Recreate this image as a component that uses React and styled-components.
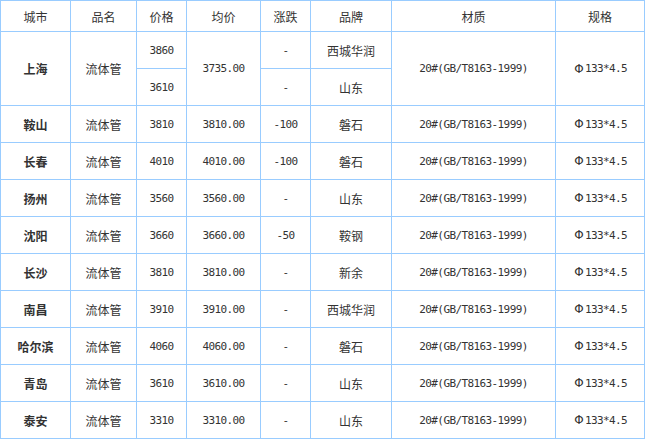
import styled, { createGlobalStyle } from "styled-components";

const GlobalStyle = createGlobalStyle`
    body {
        margin: 0;
        background: #fff;
        font-family: "Noto Sans CJK SC", sans-serif;
    }
`;

const rows = [
    { city: "鞍山", price: "3810", avg: "3810.00", change: "-100", brand: "磐石" },
    { city: "长春", price: "4010", avg: "4010.00", change: "-100", brand: "磐石" },
    { city: "扬州", price: "3560", avg: "3560.00", change: "-", brand: "山东" },
    { city: "沈阳", price: "3660", avg: "3660.00", change: "-50", brand: "鞍钢" },
    { city: "长沙", price: "3810", avg: "3810.00", change: "-", brand: "新余" },
    { city: "南昌", price: "3910", avg: "3910.00", change: "-", brand: "西城华润" },
    { city: "哈尔滨", price: "4060", avg: "4060.00", change: "-", brand: "磐石" },
    { city: "青岛", price: "3610", avg: "3610.00", change: "-", brand: "山东" },
    { city: "泰安", price: "3310", avg: "3310.00", change: "-", brand: "山东" },
];

const MATERIAL = "20#(GB/T8163-1999)";

const Spec = () => (
    <>
        <Phi>Φ</Phi>133*4.5
    </>
);

const App = () => {
    return (
        <>
            <GlobalStyle />
            <PriceGrid>
                <Cell>城市</Cell>
                <Cell>品名</Cell>
                <Cell>价格</Cell>
                <Cell>均价</Cell>
                <Cell>涨跌</Cell>
                <Cell>品牌</Cell>
                <Cell>材质</Cell>
                <Cell>规格</Cell>

                <Cell $bold $span={2}>上海</Cell>
                <Cell $span={2}>流体管</Cell>
                <Cell $mono>3860</Cell>
                <Cell $mono $span={2}>3735.00</Cell>
                <Cell $mono>-</Cell>
                <Cell>西城华润</Cell>
                <Cell $mono $span={2}>{MATERIAL}</Cell>
                <Cell $mono $span={2}><Spec /></Cell>
                <Cell $mono>3610</Cell>
                <Cell $mono>-</Cell>
                <Cell>山东</Cell>

                {rows.map((r) => (
                    <Row key={r.city} {...r} />
                ))}
            </PriceGrid>
        </>
    );
};

const Row = ({ city, price, avg, change, brand }) => (
    <>
        <Cell $bold>{city}</Cell>
        <Cell>流体管</Cell>
        <Cell $mono>{price}</Cell>
        <Cell $mono>{avg}</Cell>
        <Cell $mono>{change}</Cell>
        <Cell>{brand}</Cell>
        <Cell $mono>{MATERIAL}</Cell>
        <Cell $mono><Spec /></Cell>
    </>
);

const PriceGrid = styled.div`
    display: grid;
    grid-template-columns: 69px 65px 49px 73px 49px 80px 163px 88px;
    grid-template-rows: 30px;
    grid-auto-rows: 36px;
    gap: 1px;
    padding: 1px;
    width: max-content;
    background: #99ccff;
`;

const Cell = styled.div`
    display: flex;
    align-items: center;
    justify-content: center;
    background: #fff;
    color: #333;
    white-space: nowrap;
    grid-row: ${(p) => (p.$span ? `span ${p.$span}` : "auto")};
    font-family: ${(p) =>
        p.$mono ? `"DejaVu Sans Mono", "Noto Sans CJK SC", monospace` : `"Noto Sans CJK SC", sans-serif`};
    font-size: ${(p) => (p.$mono ? "11px" : "12px")};
    letter-spacing: ${(p) => (p.$mono ? "-0.6px" : "0")};
    font-weight: ${(p) => (p.$bold ? 700 : 400)};
`;

const Phi = styled.span`
    display: inline-block;
    width: 12px;
    text-align: center;
    font-family: "DejaVu Sans", sans-serif;
    font-size: 12px;
    letter-spacing: 0;
`;

export default App;
